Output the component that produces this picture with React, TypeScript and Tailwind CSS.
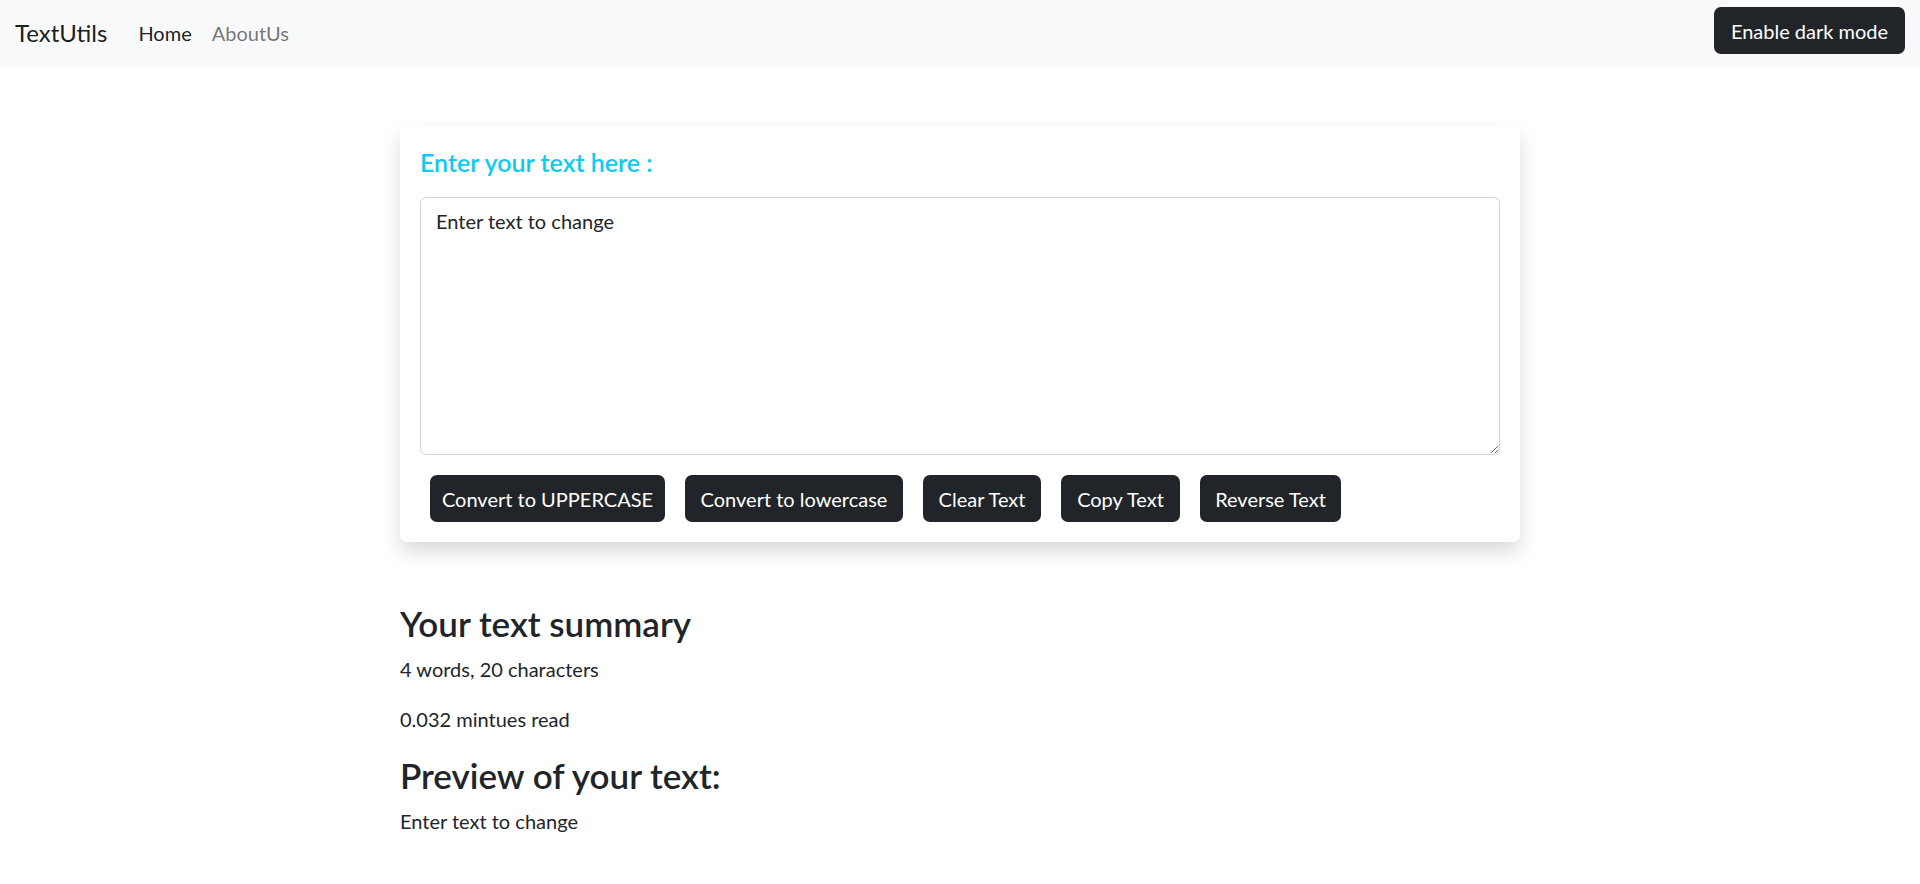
import React, { useState } from 'react';

const buttons = [
  { label: 'Convert to UPPERCASE', width: 'w-[235px]' },
  { label: 'Convert to lowercase', width: 'w-[218px]' },
  { label: 'Clear Text', width: 'w-[118px]' },
  { label: 'Copy Text', width: 'w-[119px]' },
  { label: 'Reverse Text', width: 'w-[141px]' },
];

const App = () => {
  const [text, setText] = useState('Enter text to change');

  const handleClick = (label: string) => {
    if (label === 'Convert to UPPERCASE') setText(text.toUpperCase());
    else if (label === 'Convert to lowercase') setText(text.toLowerCase());
    else if (label === 'Clear Text') setText('');
    else if (label === 'Copy Text') navigator.clipboard?.writeText(text).catch(() => {});
    else if (label === 'Reverse Text') setText(text.split('').reverse().join(''));
  };

  const words = text.split(/\s+/).filter((w) => w.length > 0).length;

  return (
    <div className="min-h-screen bg-white text-[#212529] font-['Lato','Noto_Sans',sans-serif] text-[20px] leading-[30px]">
      {/* Navbar */}
      <nav className="h-[67px] bg-[#f8f9fa] flex items-start px-[15px]">
        <div className="flex items-center h-[65px]">
          <span className="text-[24px] leading-[36px] text-black/90 mr-[21px]">TextUtils</span>
          <a className="px-[10px] text-black/90">Home</a>
          <a className="px-[10px] text-black/55">AboutUs</a>
        </div>
        <button className="ml-auto mt-[7px] w-[191px] h-[47px] rounded-[7px] bg-[#212529] text-white text-center">
          Enable dark mode
        </button>
      </nav>

      <main className="w-[1120px] mx-auto">
        {/* Input card */}
        <div className="mt-[60px] bg-white rounded-[7px] shadow-[0_10px_20px_rgba(0,0,0,0.15)] p-[20px]">
          <h5 className="text-[25px] leading-[30px] font-semibold text-[#0dcaf0] mb-[20px]">Enter your text here :</h5>
          <textarea
            rows={8}
            value={text}
            onChange={(e) => setText(e.target.value)}
            className="block w-full h-[258px] border border-[#ced4da] rounded-[6px] px-[15px] pt-[8px] pb-[7px] text-[20px] leading-[30px] text-[#212529] outline-none"
          />
          <div className="flex gap-[20px] pl-[10px] mt-[20px]">
            {buttons.map((b) => (
              <button
                key={b.label}
                onClick={() => handleClick(b.label)}
                className={`${b.width} h-[47px] rounded-[7px] bg-[#212529] text-white text-center`}
              >
                {b.label}
              </button>
            ))}
          </div>
        </div>

        {/* Summary */}
        <div className="mt-[60px]">
          <h3 className="text-[35px] leading-[42px] font-semibold mb-[10px]">Your text summary</h3>
          <p className="mb-[20px]">
            {words} words, {text.length} characters
          </p>
          <p className="mb-[20px]">{(0.008 * words).toFixed(3).replace(/0+$/, '')} mintues read</p>
          <h3 className="text-[35px] leading-[42px] font-semibold mb-[10px]">Preview of your text:</h3>
          <p>{text}</p>
        </div>
      </main>
    </div>
  );
};

export default App;
